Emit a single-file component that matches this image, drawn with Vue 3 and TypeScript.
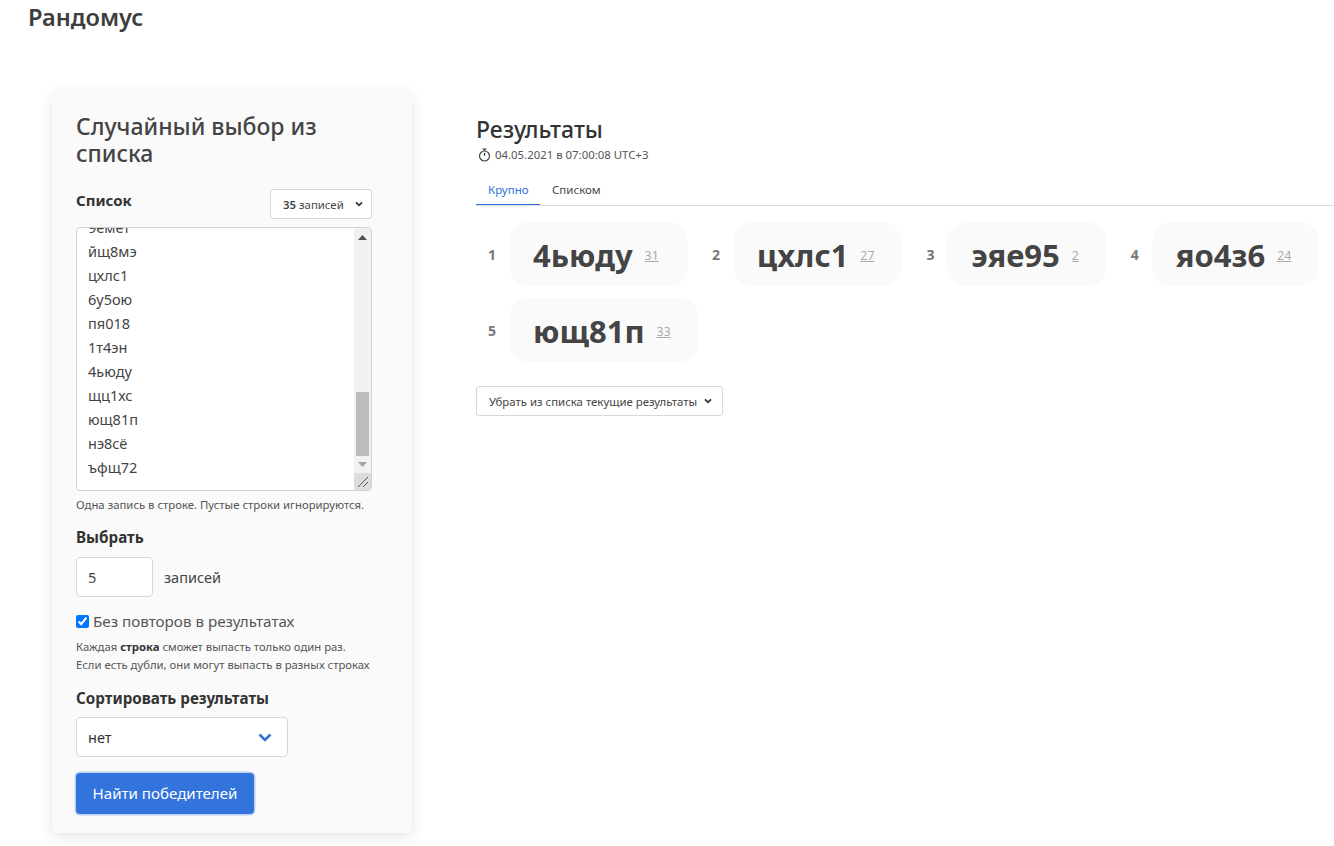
<script setup lang="ts">
const lines: string[] = ['9емет', 'йщ8мэ', 'цхлс1', '6у5ою', 'пя018', '1т4эн', '4ьюду', 'щц1хс', 'ющ81п', 'нэ8сё', 'ъфщ72']
const results = [
  { n: 1, word: '4ьюду', idx: 31 },
  { n: 2, word: 'цхлс1', idx: 27 },
  { n: 3, word: 'эяе95', idx: 2 },
  { n: 4, word: 'яо4з6', idx: 24 },
  { n: 5, word: 'ющ81п', idx: 33 },
]
</script>

<template>
  <div class="page">
    <header class="top">Рандомус</header>
    <main class="main">
      <section class="card">
        <h2 class="card-title">Случайный выбор из списка</h2>
        <div class="list-head">
          <span class="label">Список</span>
          <button class="small-btn count-btn">
            <span><span class="num">35</span> записей</span>
            <svg class="chev" width="8" height="6" viewBox="0 0 8 6"><path d="M1 1.3 4 4.3 7 1.3" fill="none" stroke="#333" stroke-width="1.8" /></svg>
          </button>
        </div>
        <div class="textarea">
          <div class="textarea-lines">
            <div v-for="l in lines" :key="l" class="tline">{{ l }}</div>
          </div>
          <div class="scrollbar">
            <svg class="arrow-up" width="9" height="5" viewBox="0 0 9 5"><path d="M4.5 0 9 5H0Z" fill="#505050" /></svg>
            <div class="thumb"></div>
            <svg class="arrow-down" width="9" height="5" viewBox="0 0 9 5"><path d="M0 0H9L4.5 5Z" fill="#a3a3a3" /></svg>
            <div class="corner">
              <svg width="12" height="12" viewBox="0 0 12 12"><path d="M1 11 11 1M6 11 11 6" stroke="#555" stroke-width="1" fill="none" /></svg>
            </div>
          </div>
        </div>
        <p class="hint hint-list">Одна запись в строке. Пустые строки игнорируются.</p>
        <div class="label label-pick">Выбрать</div>
        <div class="pick-row">
          <div class="field num-field">5</div>
          <span class="pick-unit">записей</span>
        </div>
        <label class="check-row">
          <input type="checkbox" class="check" checked />
          <span>Без повторов в результатах</span>
        </label>
        <p class="hint hint-check">Каждая <b>строка</b> сможет выпасть только один раз.<br />Если есть дубли, они могут выпасть в разных строках</p>
        <div class="label label-sort">Сортировать результаты</div>
        <div class="field select-field">
          <span>нет</span>
          <svg width="14" height="9" viewBox="0 0 14 9"><path d="M1.5 1.5 7 7 12.5 1.5" fill="none" stroke="#3273dc" stroke-width="2.6" /></svg>
        </div>
        <button class="primary">Найти победителей</button>
      </section>

      <section class="results">
        <h2 class="res-title">Результаты</h2>
        <div class="res-date">
          <svg width="13" height="14" viewBox="0 0 13 14"><circle cx="6.5" cy="8" r="5" fill="none" stroke="#444" stroke-width="1.2" /><path d="M6.5 8V4.8M4.6 1.2H8.4M6.5 1.2V3" stroke="#444" stroke-width="1.2" fill="none" /></svg>
          <span>04.05.2021 в 07:00:08 UTC+3</span>
        </div>
        <nav class="tabs">
          <span class="tab active">Крупно</span>
          <span class="tab">Списком</span>
        </nav>
        <div class="chips">
          <div v-for="r in results" :key="r.n" class="item">
            <span class="item-n">{{ r.n }}</span>
            <div class="chip">
              <span class="chip-word">{{ r.word }}</span>
              <span class="chip-idx">{{ r.idx }}</span>
            </div>
          </div>
        </div>
        <button class="small-btn remove-btn">
          <span>Убрать из списка текущие результаты</span>
          <svg class="chev" width="8" height="6" viewBox="0 0 8 6"><path d="M1 1.3 4 4.3 7 1.3" fill="none" stroke="#333" stroke-width="1.8" /></svg>
        </button>
      </section>
    </main>
  </div>
</template>

<style>
html, body { margin: 0; background: #fff; }
</style>

<style scoped>
.page {
  width: 1334px;
  height: 846px;
  overflow: hidden;
  font-family: "Noto Sans", "Open Sans", sans-serif;
  color: #444;
  background: #fff;
}
.top {
  padding: 2px 0 0 28px;
  height: 90px;
  box-sizing: border-box;
  font-size: 23.6px;
  line-height: 30px;
  font-weight: 600;
  color: #3d3d3d;
}
.main { display: flex; padding-left: 52px; gap: 64px; }
.card {
  width: 360px;
  height: 743px;
  box-sizing: border-box;
  padding: 23px 40px 0 24px;
  background: #fafafa;
  border-radius: 6px;
  box-shadow: 0 4px 14px rgba(0, 0, 0, 0.1);
}
.card-title { margin: 0; font-size: 23px; line-height: 27px; font-weight: 500; color: #444; }
.list-head { display: flex; justify-content: space-between; align-items: flex-start; margin-top: 22px; }
.label { font-size: 15.2px; line-height: 20px; font-weight: 700; color: #333; }
.small-btn {
  display: flex;
  align-items: center;
  justify-content: space-between;
  box-sizing: border-box;
  height: 30px;
  background: #fff;
  border: 1px solid #d8d8d8;
  border-radius: 3px;
  font: inherit;
  font-size: 11.4px;
  color: #444;
  padding: 0 8px 0 12px;
}
.count-btn { width: 102px; }
.list-head .label { margin-top: 1px; font-size: 15px; }
.num { font-weight: 600; }
.textarea {
  position: relative;
  margin-top: 8px;
  height: 264px;
  box-sizing: border-box;
  background: #fff;
  border: 1px solid #d2d2d2;
  border-radius: 4px;
  overflow: hidden;
}
.textarea-lines { margin-top: -13px; padding-left: 11px; }
.tline { font-size: 14.5px; line-height: 24px; color: #444; }
.scrollbar { position: absolute; top: 0; right: 0; bottom: 0; width: 17px; background: #f1f1f1; }
.arrow-up { position: absolute; top: 7px; left: 4px; }
.arrow-down { position: absolute; top: 234px; left: 4px; }
.thumb { position: absolute; top: 164px; left: 2px; width: 13px; height: 64px; background: #bcbcbc; }
.corner { position: absolute; right: 0; bottom: 0; width: 17px; height: 17px; background: #dcdcdc; display: flex; align-items: center; justify-content: center; }
.hint { margin: 0; font-size: 11.3px; color: #555; }
.hint-list { margin-top: 6px; line-height: 16px; font-size: 11.35px; }
.label-pick { margin-top: 14px; }
.pick-row { display: flex; align-items: center; gap: 11px; margin-top: 10px; }
.field {
  box-sizing: border-box;
  height: 40px;
  background: #fff;
  border: 1px solid #d8d8d8;
  border-radius: 4px;
  font-size: 14.5px;
  color: #444;
  display: flex;
  align-items: center;
  padding: 0 11px;
}
.num-field { width: 77px; }
.pick-unit { font-size: 14.5px; }
.check-row { display: flex; align-items: center; margin-top: 14px; font-size: 15.2px; line-height: 20px; color: #555; }
.check { width: 13px; height: 13px; margin: 0 4px 0 0; accent-color: #0075ff; }
.hint-check { margin-top: 7px; line-height: 18px; color: #555; }
.hint-check b { color: #333; }
.label-sort { margin-top: 14px; }
.select-field { width: 212px; justify-content: space-between; margin-top: 9px; padding-right: 15px; color: #333; }
.primary {
  display: block;
  box-sizing: border-box;
  width: 178px;
  height: 41px;
  margin-top: 16px;
  padding: 0 0 2px;
  background: #3273dc;
  color: #fff;
  border: none;
  border-radius: 4px;
  box-shadow: 0 0 0 1.5px #bcd2f5;
  font: inherit;
  font-size: 15.1px;
}
.results { flex: 1; min-width: 0; padding-top: 25px; }
.res-title { margin: 0; font-size: 23px; line-height: 28px; font-weight: 500; color: #333; }
.res-date { display: flex; align-items: center; gap: 4px; font-size: 11.4px; line-height: 16px; color: #555; margin-top: 4px; }
.res-date svg { margin-left: 2px; }
.tabs { display: flex; margin-top: 14px; border-bottom: 1px solid #dbdbdb; height: 28px; }
.tab { padding: 0 12px; font-size: 11.5px; line-height: 25px; height: 28px; box-sizing: border-box; color: #4a4a4a; }
.tab.active { color: #3273dc; width: 64px; border-bottom: 1px solid #3273dc; }
.chips { display: flex; flex-wrap: wrap; gap: 12px 0; margin-top: 16px; }
.item { display: flex; align-items: center; gap: 13px; padding-left: 12px; margin-right: 12px; }
.item-n { font-size: 14px; font-weight: 700; color: #777; }
.chip { display: flex; align-items: center; height: 64px; box-sizing: border-box; padding: 2px 28px 0 24px; background: #fafafa; border-radius: 20px; }
.item:first-child .chip { min-width: 179px; }
.item:last-child .chip { min-width: 190px; }
.chip-word { font-size: 31px; font-weight: 700; color: #444; }
.chip-idx { margin-left: 12px; font-size: 12.3px; color: #aaa; text-decoration: underline; }
.remove-btn { margin-top: 24px; width: 247px; padding: 0 10px 0 12px; }
</style>
